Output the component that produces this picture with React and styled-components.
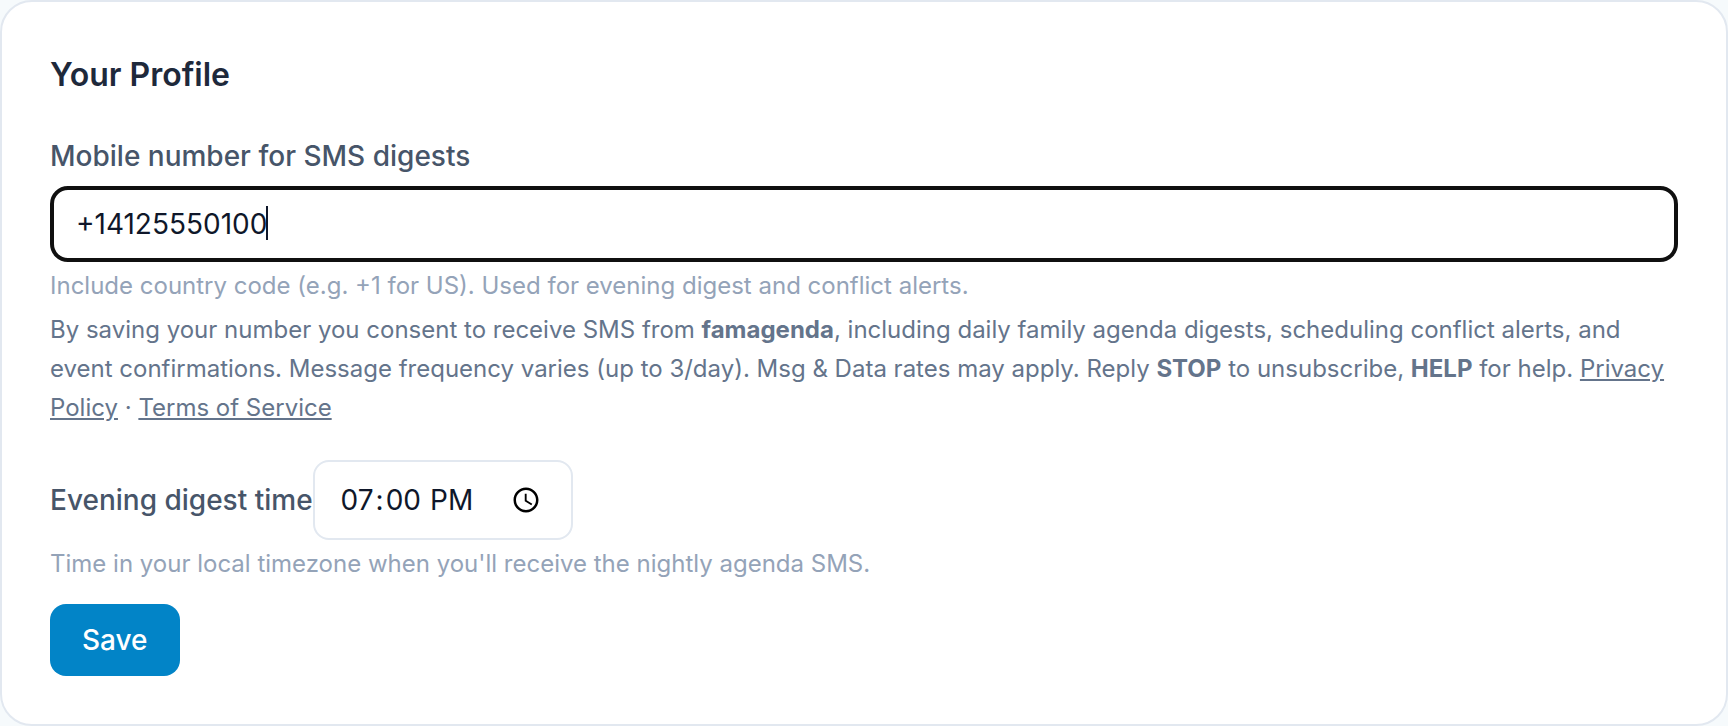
import React, { useState } from "react";
import styled, { createGlobalStyle } from "styled-components";

const GlobalStyle = createGlobalStyle`
  *, *::before, *::after { box-sizing: border-box; }
  body {
    margin: 0;
    background: #f6fafc;
    color: #0f172a;
    font-family: Inter, "Liberation Sans", sans-serif;
    font-size: 28px;
    line-height: 40px;
  }
`;

const Card = styled.form`
  padding: 48px;
  border: 2px solid #e2e8f0;
  border-radius: 32px;
  background: #ffffff;
`;

const Title = styled.h2`
  margin: 0 0 36px;
  color: #1e293b;
  font-size: 32px;
  font-weight: 600;
  line-height: 50px;
`;

const Label = styled.label`
  display: block;
  color: #475569;
  font-weight: 500;
`;

const PhoneField = styled.div`
  position: relative;
  margin: 10px 0 8px;
`;

const PhoneInput = styled.input`
  display: block;
  width: 100%;
  height: 76px;
  padding: 0 22px;
  border: 4px solid #101010;
  border-radius: 18px;
  outline: none;
  background: #ffffff;
  color: #0f172a;
  font: inherit;
`;

const Caret = styled.span`
  position: absolute;
  top: 20px;
  left: 216px;
  width: 2px;
  height: 34px;
  background: #0f172a;
`;

const Hint = styled.p`
  margin: 0;
  color: #94a3b8;
  font-size: 24px;
  line-height: 32px;
`;

const Consent = styled.p`
  margin: 8px 0 33px;
  color: #64748b;
  font-size: 24px;
  line-height: 39px;
`;

const Strong = styled.strong`
  font-weight: 700;
`;

const TextLink = styled.a`
  color: inherit;
  text-decoration: underline;
`;

const TimeRow = styled.div`
  display: flex;
  align-items: center;
  margin-bottom: 8px;
`;

const TimeInput = styled.input`
  width: 260px;
  height: 80px;
  padding: 0 24px;
  border: 2px solid #e2e8f0;
  border-radius: 16px;
  background: #ffffff;
  color: #0f172a;
  font: inherit;

  &::-webkit-datetime-edit-hour-field,
  &::-webkit-datetime-edit-minute-field,
  &::-webkit-datetime-edit-ampm-field {
    padding: 0 2px;
  }

  &::-webkit-calendar-picker-indicator {
    width: 30px;
    height: 30px;
    padding: 6px;
    margin-left: 0;
    box-sizing: content-box;
  }
`;

const SaveButton = styled.button`
  display: block;
  height: 72px;
  margin-top: 24px;
  padding: 0 32px;
  border: 0;
  border-radius: 16px;
  background: #0284c7;
  color: #ffffff;
  font: inherit;
  font-weight: 500;
  cursor: pointer;
`;

export default function App() {
  const [phone, setPhone] = useState("+14125550100");
  const [time, setTime] = useState("19:00");

  return (
    <>
      <GlobalStyle />
      <Card onSubmit={(e) => e.preventDefault()}>
        <Title>Your Profile</Title>
        <Label htmlFor="phone">Mobile number for SMS digests</Label>
        <PhoneField>
          <PhoneInput
            id="phone"
            type="tel"
            value={phone}
            onChange={(e) => setPhone(e.target.value)}
          />
          <Caret aria-hidden="true" />
        </PhoneField>
        <Hint>
          Include country code (e.g. +1 for US). Used for evening digest and
          conflict alerts.
        </Hint>
        <Consent>
          By saving your number you consent to receive SMS from{" "}
          <Strong>famagenda</Strong>, including daily family agenda digests,
          scheduling conflict alerts, and event confirmations. Message frequency
          varies (up to 3/day). Msg &amp; Data rates may apply. Reply{" "}
          <Strong>STOP</Strong> to unsubscribe, <Strong>HELP</Strong> for help.{" "}
          <TextLink href="#privacy">Privacy Policy</TextLink> ·{" "}
          <TextLink href="#terms">Terms of Service</TextLink>
        </Consent>
        <TimeRow>
          <Label htmlFor="digest-time">Evening digest time</Label>
          <TimeInput
            id="digest-time"
            type="time"
            value={time}
            onChange={(e) => setTime(e.target.value)}
          />
        </TimeRow>
        <Hint>
          Time in your local timezone when you'll receive the nightly agenda
          SMS.
        </Hint>
        <SaveButton type="submit">Save</SaveButton>
      </Card>
    </>
  );
}
